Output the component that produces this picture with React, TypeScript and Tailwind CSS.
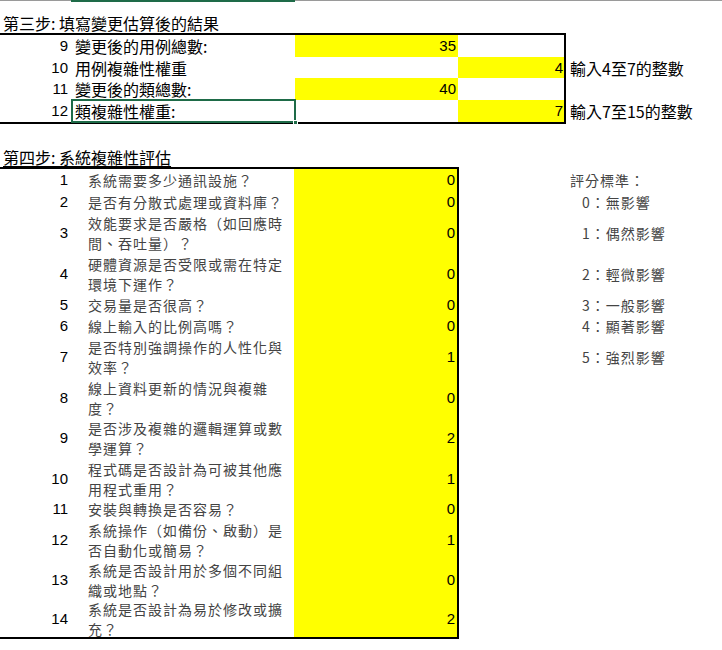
import React from "react";

const cjk = { fontFamily: '"Noto Sans CJK TC", "Noto Sans", sans-serif' };
const num = { fontFamily: '"Liberation Sans", Arial, sans-serif' };

type S1Row = { n: string; label: string; a?: string; b?: string; yA: boolean; note?: string; h: string; sel?: boolean };

const s1: S1Row[] = [
  { n: "9", label: "變更後的用例總數:", a: "35", yA: true, h: "h-[22px]" },
  { n: "10", label: "用例複雜性權重", b: "4", yA: false, note: "輸入4至7的整數", h: "h-[21px]" },
  { n: "11", label: "變更後的類總數:", a: "40", yA: true, h: "h-[22px]" },
  { n: "12", label: "類複雜性權重:", b: "7", yA: false, note: "輸入7至15的整數", h: "h-[22px]", sel: true },
];

type S2Row = { n: string; q: string; v: string; h: string; crit?: string; critTitle?: boolean };

const s2: S2Row[] = [
  { n: "1", q: "系統需要多少通訊設施？", v: "0", h: "h-[22px]", crit: "評分標準：", critTitle: true },
  { n: "2", q: "是否有分散式處理或資料庫？", v: "0", h: "h-[22px]", crit: "0：無影響" },
  { n: "3", q: "效能要求是否嚴格（如回應時間、吞吐量）？", v: "0", h: "h-[40px]", crit: "1：偶然影響" },
  { n: "4", q: "硬體資源是否受限或需在特定環境下運作？", v: "0", h: "h-[41px]", crit: "2：輕微影響" },
  { n: "5", q: "交易量是否很高？", v: "0", h: "h-[21px]", crit: "3：一般影響" },
  { n: "6", q: "線上輸入的比例高嗎？", v: "0", h: "h-[21px]", crit: "4：顯著影響" },
  { n: "7", q: "是否特別強調操作的人性化與效率？", v: "1", h: "h-[41px]", crit: "5：強烈影響" },
  { n: "8", q: "線上資料更新的情況與複雜度？", v: "0", h: "h-[41px]" },
  { n: "9", q: "是否涉及複雜的邏輯運算或數學運算？", v: "2", h: "h-[40px]" },
  { n: "10", q: "程式碼是否設計為可被其他應用程式重用？", v: "1", h: "h-[41px]" },
  { n: "11", q: "安裝與轉換是否容易？", v: "0", h: "h-[20px]" },
  { n: "12", q: "系統操作（如備份、啟動）是否自動化或簡易？", v: "1", h: "h-[41px]" },
  { n: "13", q: "系統是否設計用於多個不同組織或地點？", v: "0", h: "h-[40px]" },
  { n: "14", q: "系統是否設計為易於修改或擴充？", v: "2", h: "h-[37px]" },
];

export default function App() {
  return (
    <div className="w-[722px] h-[650px] bg-white overflow-hidden text-black">
      {/* top edge */}
      <div className="flex h-[2px]">
        <div className="w-[71px] h-[1px] bg-[#9a9a9a]" />
        <div className="w-[224px] h-[2px] bg-[#1e6b48]" />
        <div className="flex-1 h-[1px] bg-[#9a9a9a]" />
      </div>

      {/* Section 1 title */}
      <div className="h-[31px] flex items-end pl-[3px]">
        <span className="text-[16px] leading-[20px]" style={cjk}>第三步: 填寫變更估算後的結果</span>
      </div>
      <div className="w-[566px] h-[2px] bg-black" />
      {s1.map((r) => (
        <div key={r.n} className={`flex ${r.h}`}>
          <div className="flex w-[566px] border-r-2 border-black">
            <div className="w-[71px] pr-[3px] text-right text-[15px] leading-[16px] flex items-center justify-end" style={num}>
              {r.n}
            </div>
            <div className="relative w-[224px] pl-[4px] flex items-center text-[16px] leading-[18px]" style={cjk}>
              {r.label}
              {r.sel && (
                <div className="absolute left-0 top-[-1px] w-[225px] h-[24px] border-2 border-[#1e6b48]">
                  <div className="absolute right-[-4px] bottom-[-4px] w-[5px] h-[5px] bg-[#1e6b48] border border-white" />
                </div>
              )}
            </div>
            <div className={`w-[163px] flex items-center justify-end pr-[2px] text-[15px] leading-[16px] ${r.yA ? "bg-[#ffff00]" : ""}`} style={num}>
              {r.a}
            </div>
            <div className={`w-[106px] flex items-center justify-end pr-[1px] text-[15px] leading-[16px] ${!r.yA ? "bg-[#ffff00]" : ""}`} style={num}>
              {r.b}
            </div>
          </div>
          <div className="pl-[4px] flex items-center text-[16px] leading-[18px] whitespace-nowrap" style={cjk}>
            {r.note}
          </div>
        </div>
      ))}
      <div className="w-[566px] h-[2px] bg-black" />

      {/* Section 2 title */}
      <div className="h-[43px] flex items-end pl-[3px]">
        <span className="text-[16px] leading-[20px] underline underline-offset-[2px]" style={cjk}>第四步: 系統複雜性評估</span>
      </div>
      <div className="w-[459px] h-[2px] bg-black" />
      {s2.map((r) => (
        <div key={r.n} className={`flex ${r.h}`}>
          <div className="flex w-[459px] border-r-2 border-black">
            <div className="w-[70px] pr-[2px] flex items-center justify-end text-[15px] leading-[16px]" style={num}>
              {r.n}
            </div>
            <div className="w-[224px] pl-[18px] pr-[4px] flex items-center">
              <span className="text-[14px] leading-[20px] tracking-[1px] text-[#444444]" style={cjk}>
                {r.q}
              </span>
            </div>
            <div className="w-[163px] bg-[#ffff00] flex items-center justify-end pr-[2px] text-[15px] leading-[16px]" style={num}>
              {r.v}
            </div>
          </div>
          <div className={`flex items-center whitespace-nowrap text-[14px] leading-[18px] tracking-[1px] text-[#444444] ${r.critTitle ? "pl-[111px]" : "pl-[123px]"}`} style={cjk}>
            {r.crit}
          </div>
        </div>
      ))}
      <div className="w-[459px] h-[2px] bg-black" />
    </div>
  );
}
